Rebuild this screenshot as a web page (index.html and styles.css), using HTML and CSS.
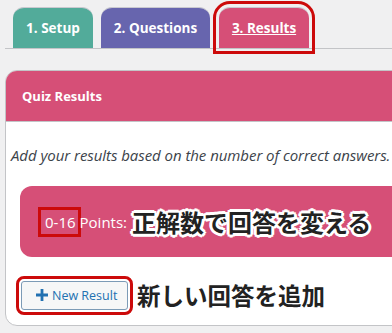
FILE: index.html
```html
<!DOCTYPE html>
<html lang="en">
<head>
  <meta charset="UTF-8">
  <meta name="viewport" content="width=device-width, initial-scale=1.0">
  <title>Quiz Results</title>
  <link rel="stylesheet" href="styles.css">
</head>
<body>
  <div class="tabs">
    <a class="tab tab-setup">1. Setup</a>
    <a class="tab tab-questions">2. Questions</a>
    <a class="tab tab-results marked">3. Results</a>
  </div>

  <div class="card">
    <div class="card-header">Quiz Results</div>
    <div class="card-body">
      <p class="hint">Add your results based on the number of correct answers.</p>

      <div class="result-box">
        <span class="range marked">0-16</span>
        <span class="points">Points:</span>
        <span class="note note-outline">正解数で回答を変える</span>
      </div>

      <div class="add-row">
        <button class="btn-new marked">
          <svg width="12" height="12" viewBox="0 0 12 12"><path d="M4.6 0h2.8v4.6H12v2.8H7.4V12H4.6V7.4H0V4.6h4.6z" fill="#2271b1"/></svg>
          New Result
        </button>
        <span class="note">新しい回答を追加</span>
      </div>
    </div>
  </div>
</body>
</html>
```

FILE: styles.css
```css
body {
  margin: 0;
  background-color: #f0f0f1;
  font-family: 'Open Sans', 'Noto Sans', sans-serif;
  overflow: hidden;
}

.tabs {
  display: flex;
  gap: 8px;
  margin-left: 5px;
  padding: 7px 0 0 8px;
  border-bottom: 1px solid #c3c4c7;
}

.tab {
  display: flex;
  align-items: center;
  justify-content: center;
  height: 41px;
  border-radius: 11px 11px 0 0;
  border-top: 1px solid #c9c9d0;
  box-sizing: border-box;
  color: #fff;
  font-weight: 700;
  font-size: 13.5px;
  white-space: nowrap;
}

.tab-setup {
  width: 80px;
  background-color: #52ab9a;
}

.tab-questions {
  width: 109px;
  background-color: #6765ae;
}

.tab-results {
  width: 90px;
  margin-left: 1px;
  background-color: #d64f77;
  text-decoration: underline;
}

.marked {
  outline: 3px solid #cc0a0a;
  outline-offset: 2px;
}

.tab-results.marked {
  outline-offset: 3px;
}

.card {
  width: 440px;
  margin: 21px 0 0 5px;
  background-color: #fff;
  border: 1px solid #c3c4c7;
  border-radius: 12px;
  overflow: hidden;
}

.card-header {
  height: 50px;
  padding-left: 16px;
  display: flex;
  align-items: center;
  background-color: #d64f77;
  border-bottom: 1px solid #c3c4c7;
  color: #fff;
  font-weight: 700;
  font-size: 13px;
}

.card-body {
  padding: 23px 0 13px;
}

.hint {
  margin: 0 0 21px 5px;
  color: #3c434a;
  font-style: italic;
  font-size: 15px;
  letter-spacing: -0.05px;
}

.result-box {
  display: flex;
  align-items: center;
  height: 71px;
  margin-left: 14px;
  padding-left: 21px;
  background-color: #d64f77;
  border-radius: 12px;
  color: #fff;
  font-size: 15px;
}

.range {
  padding: 3px 2px 3px 4px;
  line-height: 18px;
}

.range.marked {
  outline-offset: 0;
}

.points {
  margin-left: 2px;
  margin-right: 5px;
}

.note {
  font-family: 'Noto Sans CJK JP', sans-serif;
  font-weight: 700;
  font-size: 24px;
  color: #222;
}

.note-outline {
  text-shadow:
    2px 0 0 #fff, -2px 0 0 #fff, 0 2px 0 #fff, 0 -2px 0 #fff,
    2px 2px 0 #fff, -2px -2px 0 #fff, 2px -2px 0 #fff, -2px 2px 0 #fff,
    3px 0 0 #fff, -3px 0 0 #fff, 0 3px 0 #fff, 0 -3px 0 #fff;
}

.add-row .note {
  font-size: 23.5px;
}

.add-row {
  display: flex;
  align-items: center;
  gap: 9px;
  margin: 21px 0 0 15px;
}

.btn-new {
  display: flex;
  align-items: center;
  gap: 4px;
  width: 107px;
  height: 29px;
  padding: 0 0 0 14px;
  background-color: #f6f7f7;
  border: 1px solid #7c9bb6;
  border-radius: 3px;
  color: #2271b1;
  font-family: 'Open Sans', 'Noto Sans', sans-serif;
  font-size: 12.5px;
}
```
